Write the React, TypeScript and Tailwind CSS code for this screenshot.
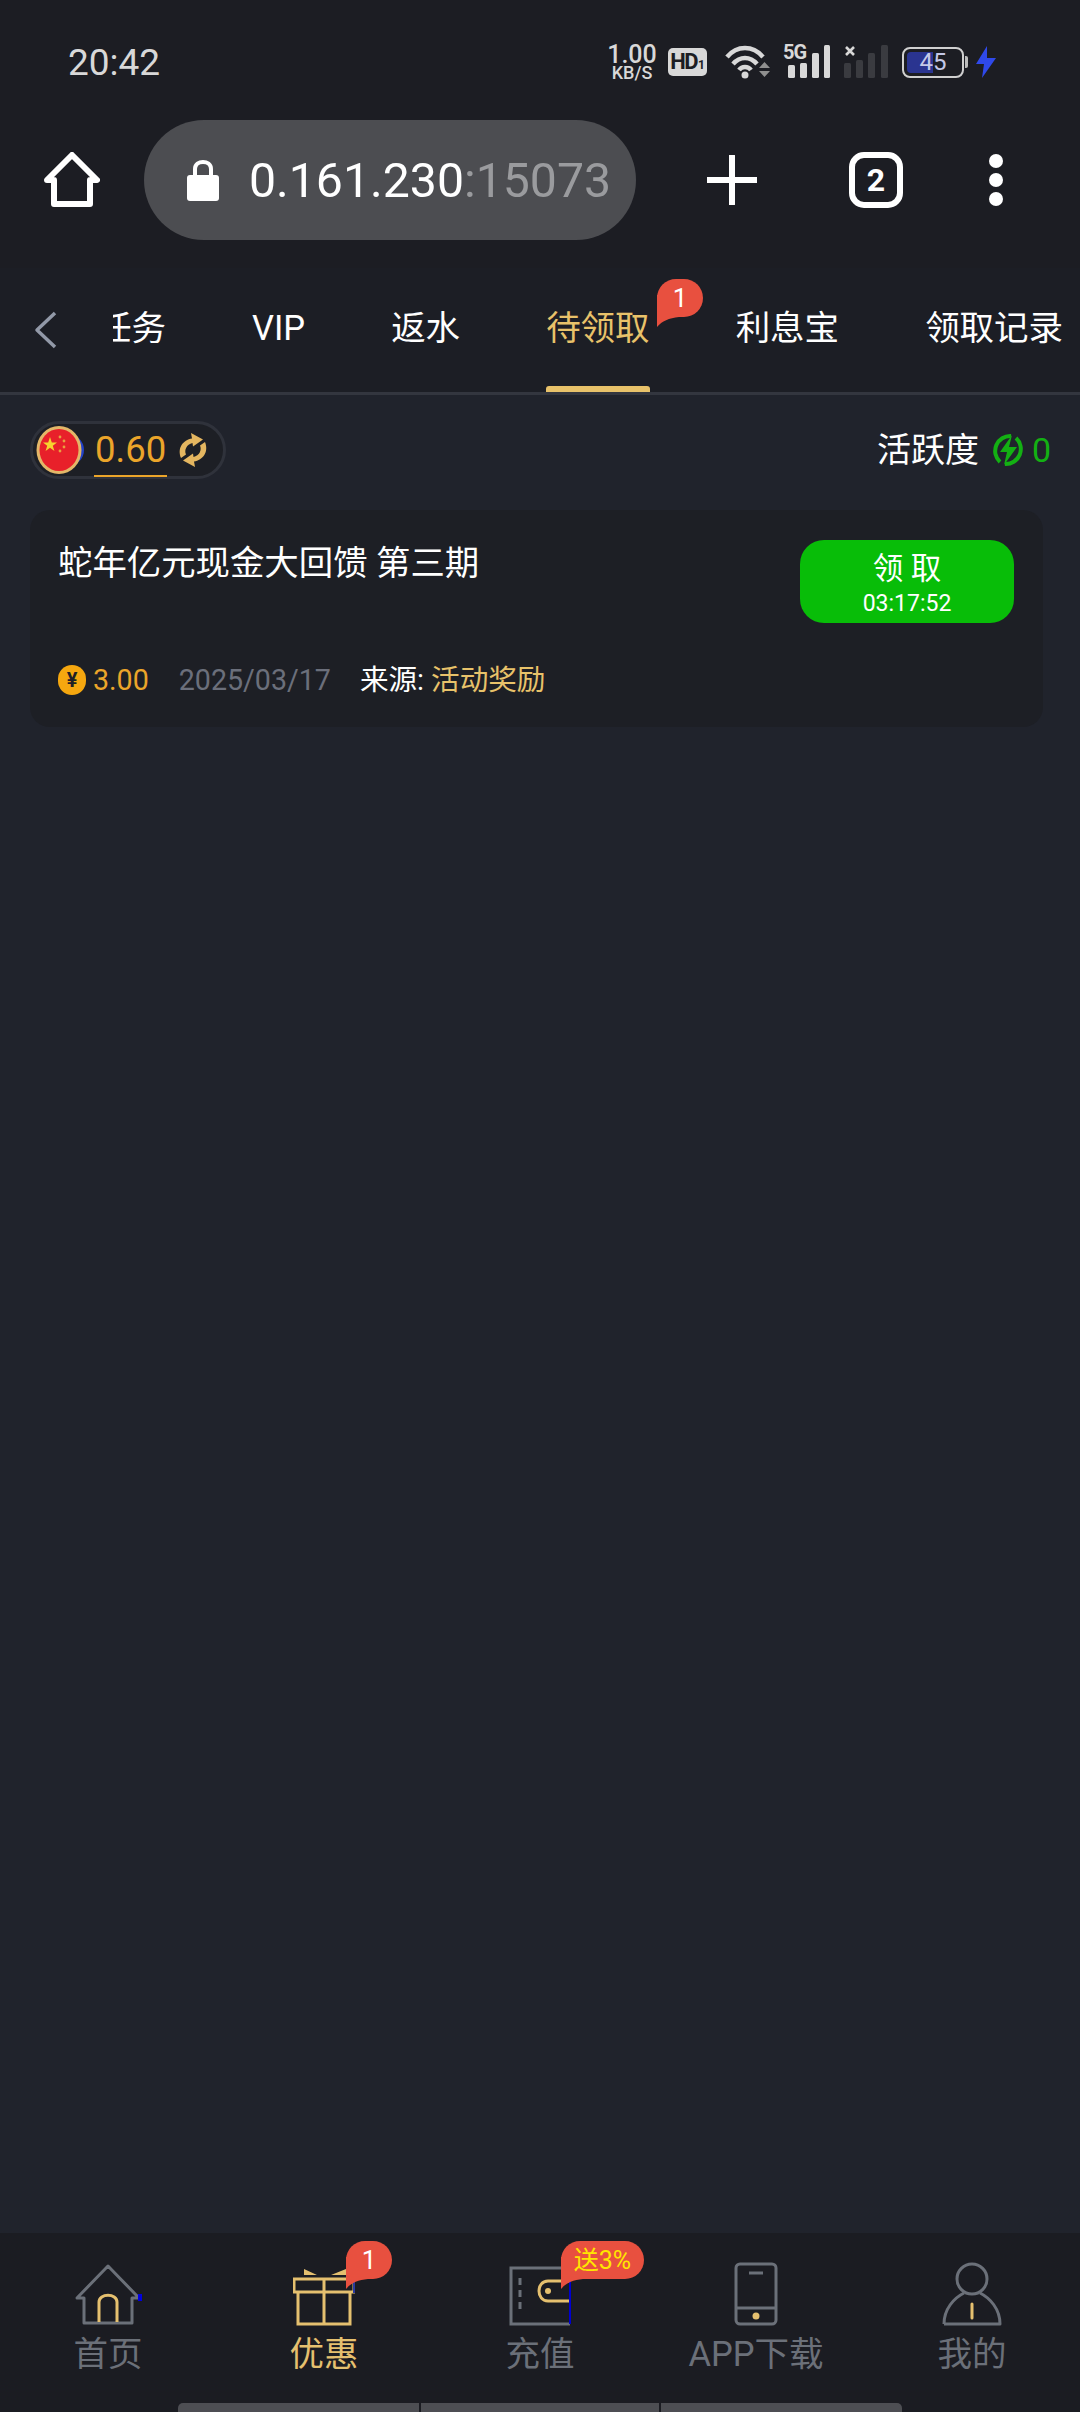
import React from "react";

function Bubble({ children, className }: { children: React.ReactNode; className: string }) {
  return (
    <div className={`absolute h-[38px] rounded-[19px] bg-[#e8503f] flex items-center justify-center leading-none ${className}`}>
      <svg className="absolute left-0 top-[16px]" width="22" height="32" viewBox="0 0 22 32">
        <path d="M0 0H22V22C12 23 5 26 0 32Z" fill="#e8503f" />
      </svg>
      <span className="relative">{children}</span>
    </div>
  );
}

function StatusIcons() {
  return (
    <div className="flex items-center text-[#d8d8d8]">
      <div className="w-[50px] flex flex-col items-center font-medium leading-none">
        <span className="text-[25px] leading-[21px]">1.00</span>
        <span className="text-[18px] leading-[16px]">KB/S</span>
      </div>
      <div className="ml-[11px] w-[39px] h-[28px] rounded-[5px] bg-[#d8d8d8] flex items-baseline justify-center text-[#1c1d23] font-bold leading-[28px]">
        <span className="text-[22px] tracking-[-1.5px]">HD</span>
        <span className="text-[12px] ml-[1px]">1</span>
      </div>
      <svg className="ml-[17px]" width="47" height="36" viewBox="0 0 47 36">
        <g fill="none" stroke="#d8d8d8" strokeWidth="4.5">
          <path d="M3 13C13 1 29 1 39 13" />
          <path d="M9 20C16 12 26 12 33 20" />
          <path d="M15 26C18 22 24 22 27 26" />
        </g>
        <circle cx="21" cy="31" r="3.5" fill="#d8d8d8" />
        <path d="M35 24H46L40.5 18Z M35 27H46L40.5 33Z" fill="#8f8f8f" />
      </svg>
      <div className="ml-[13px] relative w-[46px] h-[34px]">
        <span className="absolute left-[-1px] top-[-3px] text-[20px] leading-[20px] font-bold tracking-[-1px]">5G</span>
        <svg className="absolute left-0 top-0" width="46" height="34" viewBox="0 0 46 34">
          <rect x="4" y="20" width="7" height="13" rx="1.5" fill="#d8d8d8" />
          <rect x="16" y="18" width="7" height="15" rx="1.5" fill="#d8d8d8" />
          <rect x="28" y="8" width="7" height="25" rx="1.5" fill="#d8d8d8" />
          <rect x="40" y="0" width="6" height="33" rx="1.5" fill="#d8d8d8" />
        </svg>
      </div>
      <svg className="ml-[14px]" width="44" height="34" viewBox="0 0 44 34">
        <path d="M2 2L10 10M10 2L2 10" stroke="#d8d8d8" strokeWidth="2.6" />
        <rect x="0" y="18" width="7" height="15" rx="1.5" fill="#3a3b40" />
        <rect x="12" y="15" width="7" height="18" rx="1.5" fill="#3a3b40" />
        <rect x="24" y="8" width="7" height="25" rx="1.5" fill="#3a3b40" />
        <rect x="37" y="0" width="7" height="33" rx="1.5" fill="#3a3b40" />
      </svg>
      <div className="ml-[14px] flex items-center">
        <div className="relative w-[62px] h-[31px] rounded-[8px] border-[2px] border-[#d0d0d0] p-[3px]">
          <div className="h-full w-[26px] rounded-l-[4px] bg-[#2a3490]" />
          <span className="absolute inset-0 flex items-center justify-center text-[24px] leading-none text-[#c4c8e8]">45</span>
        </div>
        <div className="ml-[1px] w-[3px] h-[12px] rounded-r-[2px] bg-[#bdbdbd]" />
      </div>
      <svg className="ml-[8px]" width="20" height="32" viewBox="0 0 20 32">
        <path d="M11 0L0 18H8L6 32L20 12H11Z" fill="#2f49ea" />
      </svg>
    </div>
  );
}

function BrowserBar() {
  return (
    <div className="flex items-center h-[120px]">
      <svg className="ml-[44px] shrink-0" width="56" height="56" viewBox="0 0 56 56">
        <path d="M28 3L53 28H46V52H10V28H3Z" fill="none" stroke="#fff" strokeWidth="6" strokeLinejoin="round" />
      </svg>
      <div className="ml-[44px] w-[492px] h-[120px] rounded-[60px] bg-[#4c4d51] flex items-center shrink-0">
        <svg className="ml-[42px]" width="34" height="44" viewBox="0 0 34 44">
          <path d="M9 19V11C9 1.5 25 1.5 25 11V19" fill="none" stroke="#fff" strokeWidth="4" />
          <rect x="1" y="17" width="32" height="26" rx="3" fill="#fff" />
        </svg>
        <span className="ml-[29px] mt-[2px] text-[48.2px] leading-none text-white whitespace-nowrap">
          0.161.230<span className="text-[#9a9b9e]">:15073</span>
        </span>
      </div>
      <svg className="ml-[71px] shrink-0" width="50" height="50" viewBox="0 0 50 50">
        <path d="M25 1V49M1 25H49" stroke="#fff" strokeWidth="6" strokeLinecap="round" />
      </svg>
      <div className="ml-[92px] w-[54px] h-[56px] rounded-[15px] border-[6px] border-white flex items-center justify-center text-[32px] leading-none font-bold text-white shrink-0">
        2
      </div>
      <div className="ml-[86px] flex flex-col gap-[5px] shrink-0">
        <div className="w-[14px] h-[14px] rounded-full bg-white" />
        <div className="w-[14px] h-[14px] rounded-full bg-white" />
        <div className="w-[14px] h-[14px] rounded-full bg-white" />
      </div>
    </div>
  );
}

function Tabs() {
  return (
    <div className="flex items-center h-[127px] border-b-[3px] border-[#33363f] bg-[#1c1e25] overflow-hidden">
      <svg className="ml-[34px] shrink-0" width="24" height="38" viewBox="0 0 24 38">
        <path d="M21 2L3 19L21 36" fill="none" stroke="#9299a8" strokeWidth="3.5" strokeLinejoin="round" />
      </svg>
      <div className="ml-[55px] flex-1 overflow-hidden h-full">
        <div className="ml-[-16px] flex gap-[86px] h-full items-center text-[34.5px] leading-none text-white whitespace-nowrap w-[1000px]">
          <span className="mt-[-3px]">任务</span>
          <span className="mt-[-3px]">VIP</span>
          <span className="mt-[-3px]">返水</span>
          <div className="relative h-full flex items-center text-[#e8c26a]">
            <span className="mt-[-3px]">待领取</span>
            <div className="absolute left-0 right-0 bottom-0 h-[6px] rounded-t-[3px] bg-[#e8c26a]" />
          </div>
          <span className="mt-[-3px]">利息宝</span>
          <span className="mt-[-3px]">领取记录</span>
        </div>
      </div>
    </div>
  );
}

function Flag() {
  return (
    <div className="relative w-[46px] h-[48px] shrink-0">
      <div className="absolute right-[-2px] top-[8px] w-[20px] h-[32px] rounded-r-full bg-[#2342c8]" />
      <svg className="absolute left-0 top-0" width="46" height="48" viewBox="0 0 46 48">
        <ellipse cx="23" cy="24" rx="22.5" ry="24" fill="#e3b768" />
        <ellipse cx="23" cy="24" rx="19.5" ry="21" fill="#e8202a" />
        <path d="M14 11L15.8 16.5L21 16.5L16.8 19.8L18.4 25L14 21.8L9.6 25L11.2 19.8L7 16.5L12.2 16.5Z" fill="#f6d32e" />
        <circle cx="24" cy="11" r="1.4" fill="#e8a040" />
        <circle cx="28" cy="15" r="1.4" fill="#e8a040" />
        <circle cx="28" cy="21" r="1.4" fill="#e8a040" />
        <circle cx="24" cy="25" r="1.4" fill="#e8a040" />
      </svg>
    </div>
  );
}

function Balance() {
  return (
    <div className="flex items-center justify-between px-[30px]">
      <div className="flex items-center w-[196px] h-[58px] rounded-[29px] border-[3px] border-[#2f323b] bg-[#1d1f25] pl-[3px]">
        <Flag />
        <span className="ml-[13px] relative text-[36.5px] leading-none text-[#eba52a]">
          0.60
          <span className="absolute left-[-1px] right-[-1px] bottom-[-9px] h-[2px] bg-[#eba52a]" />
        </span>
        <svg className="ml-[10px]" width="34" height="36" viewBox="0 0 34 36">
          <g fill="#e4b660">
            <path d="M5 26C1 16 7 8 16 6.5L15 1L27 7.5L17 14.5L16.5 11C10.5 12.5 8 18 10 22.5Z" />
            <path d="M29 10C33 20 27 28 18 29.5L19 35L7 28.5L17 21.5L17.5 25C23.5 23.5 26 18 24 13.5Z" />
          </g>
        </svg>
      </div>
      <div className="flex items-center">
        <span className="text-[34px] leading-none text-white">活跃度</span>
        <svg className="ml-[12px]" width="34" height="36" viewBox="0 0 34 36">
          <path d="M20 4A15 15 0 0 0 9 30M14 32A15 15 0 0 0 25 6" fill="none" stroke="#13b013" strokeWidth="4" />
          <path d="M21 3L9 20H16L13 33L26 15H18Z" fill="#13b013" />
        </svg>
        <span className="ml-[7px] mr-[-1px] text-[34px] leading-none text-[#13b013]">0</span>
      </div>
    </div>
  );
}

function Card() {
  return (
    <div className="ml-[30px] mt-[31px] mr-[37px] h-[217px] rounded-[20px] bg-[#1d1f25] pl-[28px] pr-[29px] pt-[30px] flex flex-col">
      <div className="flex items-start justify-between">
        <div className="text-[34.4px] leading-[44px] mt-[1px] text-white whitespace-nowrap">蛇年亿元现金大回馈 第三期</div>
        <div className="w-[214px] h-[83px] rounded-[24px] bg-[#08bd08] flex flex-col items-center text-white pt-[10px]">
          <span className="text-[30.5px] leading-[36px] mt-[1px]">领 取</span>
          <span className="text-[23px] leading-[28px] mt-[3px]">03:17:52</span>
        </div>
      </div>
      <div className="flex items-center mt-[42px] text-[28.6px] leading-none whitespace-nowrap">
        <div className="w-[28px] h-[30px] rounded-full bg-[#f5a70f] flex items-center justify-center text-[20px] font-bold text-[#1d1f25]">¥</div>
        <span className="ml-[7px] text-[#eba52a]">3.00</span>
        <span className="ml-[30px] text-[#6b6f7b]">2025/03/17</span>
        <span className="ml-[29px] text-white">来源:</span>
        <span className="ml-[7px] text-[#e8c26a]">活动奖励</span>
      </div>
    </div>
  );
}

const gray = "#6b7079";
const gold = "#e5c06f";

function NavItem({ label, active, children }: { label: string; active?: boolean; children: React.ReactNode }) {
  return (
    <div className="relative w-[216px] flex flex-col items-center pt-[31px]">
      <div className="h-[62px] flex items-end justify-center">{children}</div>
      <span className={`mt-[7px] text-[34.5px] leading-[42px] whitespace-nowrap ${active ? "text-[#e5c06f]" : "text-[#6b7079]"}`}>{label}</span>
    </div>
  );
}

function BottomNav() {
  return (
    <div className="h-[179px] bg-[#1b1c22] relative">
      <div className="flex">
        <NavItem label="首页">
          <svg width="68" height="62" viewBox="0 0 68 62">
            <path d="M10 34H3L34 2L65 34H58V59H10Z" fill="none" stroke={gray} strokeWidth="3" strokeLinejoin="round" />
            <path d="M25 58V38C25 29 43 29 43 38V58" fill="none" stroke={gold} strokeWidth="3" />
            <rect x="64" y="30" width="4" height="7" fill="#0000e0" />
          </svg>
        </NavItem>
        <NavItem label="优惠" active>
          <svg width="62" height="62" viewBox="0 0 62 62">
            <path d="M11 5L24 11H11Z M53 5L38 11H53Z" fill={gold} />
            <path d="M1 15H61V28H1Z M5 28H57V60H5Z M31 15V60" fill="none" stroke={gold} strokeWidth="3" />
            <path d="M61 18V29" stroke="#2a3aa0" strokeWidth="2" />
          </svg>
          <Bubble className="left-[130px] top-[8px] w-[46px] text-[26px] text-white">1</Bubble>
        </NavItem>
        <NavItem label="充值">
          <svg width="62" height="60" viewBox="0 0 62 60">
            <path d="M61 2H2V58H61" fill="none" stroke={gray} strokeWidth="3" />
            <path d="M11 12V44" stroke={gray} strokeWidth="3" strokeDasharray="7 5" />
            <path d="M61 15H39C27 15 27 35 39 35H61" fill="none" stroke={gold} strokeWidth="3" />
            <circle cx="39" cy="25" r="3" fill={gold} />
            <path d="M61 15V58" stroke="#0000d0" strokeWidth="2" />
          </svg>
          <Bubble className="left-[129px] top-[8px] w-[83px] text-[25px] text-[#ffe600]">送3%</Bubble>
        </NavItem>
        <NavItem label="APP下载">
          <svg width="44" height="64" viewBox="0 0 44 64">
            <rect x="2" y="2" width="40" height="60" rx="4" fill="none" stroke={gray} strokeWidth="3" />
            <path d="M2 46H42M15 11H29" stroke={gray} strokeWidth="3" />
            <circle cx="22" cy="54" r="3.5" fill={gold} />
          </svg>
        </NavItem>
        <NavItem label="我的">
          <svg width="60" height="64" viewBox="0 0 60 64">
            <circle cx="30" cy="17" r="15" fill="none" stroke={gray} strokeWidth="3" />
            <path d="M2 62C2 47 12 36 22 31M38 31C48 36 58 47 58 62H2" fill="none" stroke={gray} strokeWidth="3" strokeLinejoin="round" />
            <path d="M30 42V56" stroke={gold} strokeWidth="3" strokeLinecap="round" />
          </svg>
        </NavItem>
      </div>
      <div className="absolute left-[178px] bottom-0 flex gap-[2px] h-[9px]">
        <div className="w-[241px] rounded-tl-[5px] bg-[#4d4e53]" />
        <div className="w-[238px] bg-[#4d4e53]" />
        <div className="w-[241px] rounded-tr-[5px] bg-[#4d4e53]" />
      </div>
    </div>
  );
}

export default function App() {
  return (
    <div className="w-[1080px] h-[2412px] bg-[#20232c] flex flex-col overflow-hidden font-[Roboto,'Noto_Sans_CJK_SC',sans-serif]">
      <div className="bg-[#1c1d23] h-[268px] shrink-0">
        <div className="flex items-center justify-between h-[120px] pl-[68px] pr-[84px] pt-[4px]">
          <span className="text-[37px] leading-none text-[#d8d8d8]">20:42</span>
          <StatusIcons />
        </div>
        <BrowserBar />
      </div>
      <div className="relative shrink-0">
        <Tabs />
        <Bubble className="left-[657px] top-[11px] w-[46px] text-[26px] text-white">1</Bubble>
      </div>
      <div className="flex-1 pt-[26px]">
        <Balance />
        <Card />
      </div>
      <BottomNav />
    </div>
  );
}
